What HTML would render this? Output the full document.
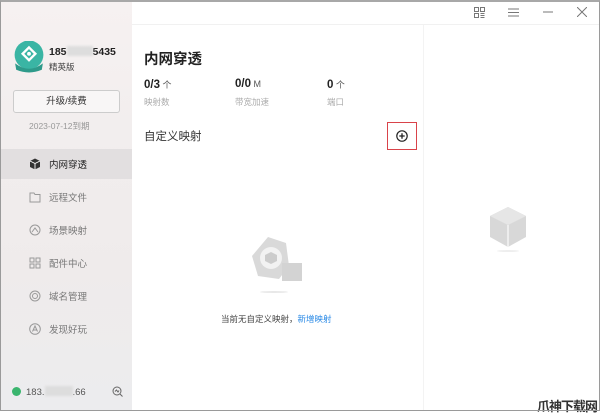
<!DOCTYPE html>
<html><head><meta charset="utf-8"><style>
*{margin:0;padding:0;box-sizing:border-box}
body{width:600px;height:411px;overflow:hidden;font-family:"Liberation Sans","Noto Sans CJK SC",sans-serif;background:#fff;position:relative;color:#222}
.frame{position:absolute;inset:0;border:1px solid #9a9a9a;border-top:2px solid #a8a8a8}
.side{position:absolute;left:1px;top:2px;width:131px;height:408px;background:linear-gradient(180deg,#f6f1f1 0%,#f1eded 40%,#efebeb 65%,#ececee 100%)}
.abs{position:absolute;white-space:nowrap}
.nav{position:absolute;left:0;width:131px;height:30px;font-size:9.5px;color:#777;display:flex;align-items:center;padding-left:28px}
.nav svg{margin-right:8px}
.nav.act{background:#e2dfe0;color:#222}
.topline{position:absolute;left:132px;top:24px;width:467px;height:1px;background:#f1f1f1}
.vline{position:absolute;left:423px;top:25px;width:1px;height:385px;background:#f3f3f3}
</style></head><body>
<div class="side">
 <svg class="abs" style="left:12px;top:39px" width="32" height="32" viewBox="0 0 30 30"><circle cx="15" cy="13" r="13.5" fill="#3ab5a4"/><path d="M2 21 Q15 31 28 21 L27 27 Q15 32 3 27Z" fill="#2e9a8a"/><path d="M15 6 L21 12 L15 18 L9 12Z" fill="none" stroke="#fff" stroke-width="2.2"/><circle cx="15" cy="12" r="1.8" fill="#fff"/></svg>
 <div class="abs" style="left:48px;top:44px;font-size:10.5px;font-weight:bold;color:#222">185<span style="display:inline-block;width:26px;height:10px;background:#ddd;vertical-align:-1px;filter:blur(1px)"></span>5435</div>
 <div class="abs" style="left:48px;top:59px;font-size:8.5px;color:#444">精英版</div>
 <div class="abs" style="left:12px;top:88px;width:107px;height:23px;border:1px solid #ccc;border-radius:3px;background:#f8f6f6;font-size:9.5px;color:#333;text-align:center;line-height:21px">升级/续费</div>
 <div class="abs" style="left:28px;top:118px;font-size:8.5px;color:#999">2023-07-12到期</div>
 <div class="nav act" style="top:147px"><svg width="12" height="12" viewBox="0 0 12 12"><path d="M6 0.5 L11 3 L11 9 L6 11.5 L1 9 L1 3Z" fill="#333"/><path d="M1 3 L6 5.5 L11 3 M6 5.5 V11.5" stroke="#fff" stroke-width="0.9" fill="none"/></svg>内网穿透</div>
 <div class="nav" style="top:180px"><svg width="12" height="11" viewBox="0 0 12 11"><path d="M1 1 H5 L6 2.5 H11 V10 H1Z" fill="none" stroke="#999" stroke-width="1"/></svg>远程文件</div>
 <div class="nav" style="top:213px"><svg width="12" height="12" viewBox="0 0 12 12"><circle cx="6" cy="6" r="5" fill="none" stroke="#999"/><path d="M3 8 L6 4 L9 8" fill="none" stroke="#999"/></svg>场景映射</div>
 <div class="nav" style="top:246px"><svg width="12" height="12" viewBox="0 0 12 12"><rect x="1" y="1" width="4" height="4" fill="none" stroke="#999"/><rect x="7" y="1" width="4" height="4" fill="none" stroke="#999"/><rect x="1" y="7" width="4" height="4" fill="none" stroke="#999"/><rect x="7" y="7" width="4" height="4" fill="none" stroke="#999"/></svg>配件中心</div>
 <div class="nav" style="top:279px"><svg width="12" height="12" viewBox="0 0 12 12"><circle cx="6" cy="6" r="5" fill="none" stroke="#999"/><circle cx="6" cy="6" r="2.5" fill="none" stroke="#999"/></svg>域名管理</div>
 <div class="nav" style="top:312px"><svg width="12" height="12" viewBox="0 0 12 12"><circle cx="6" cy="6" r="5.3" fill="none" stroke="#999"/><path d="M3.5 8.5 L6 3 L8.5 8.5 M4.5 7 H7.5" fill="none" stroke="#999"/></svg>发现好玩</div>
 <svg class="abs" style="left:11px;top:385px" width="9" height="9"><circle cx="4.5" cy="4.5" r="4.5" fill="#3ab56e"/></svg>
 <div class="abs" style="left:25px;top:384px;font-size:9.5px;color:#555">183.<span style="display:inline-block;width:28px;height:10px;background:#ddd;vertical-align:-1px;filter:blur(1px)"></span>.66</div>
 <svg class="abs" style="left:111px;top:384px" width="11" height="11" viewBox="0 0 11 11"><circle cx="5" cy="5" r="4" fill="none" stroke="#666"/><path d="M8 8 L10.5 10.5 M3 5.5 L4.5 4 L6 6 L7 4.5" stroke="#666" fill="none"/></svg>
</div>
<div class="topline"></div><div class="vline"></div>
<svg class="abs" style="left:474px;top:7px" width="11" height="11" viewBox="0 0 11 11" fill="none" stroke="#777"><rect x="0.5" y="0.5" width="4" height="4"/><rect x="6.5" y="0.5" width="4" height="4"/><rect x="0.5" y="6.5" width="4" height="4"/><path d="M6.5 6.5 H10.5 M6.5 8.5 H10.5 M6.5 10.5 H10.5"/></svg>
<svg class="abs" style="left:508px;top:8px" width="11" height="9" stroke="#777"><path d="M0 1H11M0 4.5H11M0 8H11"/></svg>
<svg class="abs" style="left:543px;top:11px" width="10" height="2" stroke="#777"><path d="M0 1H10"/></svg>
<svg class="abs" style="left:577px;top:7px" width="10" height="10" stroke="#777"><path d="M0 0L10 10M10 0L0 10"/></svg>
<div class="abs" style="left:144px;top:48px;font-size:14.5px;font-weight:bold;color:#222">内网穿透</div>
<div class="abs" style="left:144px;top:78px;font-size:11.5px;font-weight:bold">0/3<span style="font-weight:normal;font-size:9px;color:#555"> 个</span></div>
<div class="abs" style="left:235px;top:78px;font-size:11.5px;font-weight:bold">0/0<span style="font-weight:normal;font-size:9px;color:#555"> M</span></div>
<div class="abs" style="left:327px;top:78px;font-size:11.5px;font-weight:bold">0<span style="font-weight:normal;font-size:9px;color:#555"> 个</span></div>
<div class="abs" style="left:144px;top:96px;font-size:8.5px;color:#aaa">映射数</div>
<div class="abs" style="left:235px;top:96px;font-size:8.5px;color:#aaa">带宽加速</div>
<div class="abs" style="left:327px;top:96px;font-size:8.5px;color:#aaa">端口</div>
<div class="abs" style="left:144px;top:128px;font-size:11.5px;color:#333">自定义映射</div>
<div class="abs" style="left:387px;top:122px;width:30px;height:28px;border:1px solid #d9434a"></div>
<svg class="abs" style="left:396px;top:130px" width="12" height="12" viewBox="0 0 12 12"><circle cx="6" cy="6" r="5.2" fill="none" stroke="#222" stroke-width="1.2"/><path d="M6 3.3V8.7M3.3 6H8.7" stroke="#222" stroke-width="1.3"/></svg>
<svg class="abs" style="left:246px;top:236px" width="64" height="62" viewBox="0 0 64 62"><path d="M22 1 L40 7 L43 30 L33 43 L12 40 L6 20 Z" fill="#d9d9d9"/><circle cx="25" cy="22" r="11" fill="#f2f2f2"/><path d="M25 16 L31 19 V25 L25 28 L19 25 V19Z" fill="#ccc"/><rect x="36" y="27" width="20" height="18" fill="#d3d3d3"/><ellipse cx="28" cy="56" rx="14" ry="1" fill="#e8e8e8"/></svg>
<div class="abs" style="left:221px;top:313px;font-size:8.5px;color:#444">当前无自定义映射，<span style="color:#2a8ae6">新增映射</span></div>
<svg class="abs" style="left:486px;top:205px" width="44" height="48" viewBox="0 0 44 48"><path d="M22 2 L40 11 V32 L22 42 L4 32 V11Z" fill="#d8d8d8"/><path d="M4 11 L22 20 L40 11 L22 2Z" fill="#e6e6e6"/><path d="M22 20V42" stroke="#f4f4f4" stroke-width="1.5"/><ellipse cx="22" cy="46" rx="11" ry="1" fill="#eee"/></svg>
<div class="abs" style="left:537px;top:396px;font-size:13px;font-weight:bold;color:#333;letter-spacing:-1px">爪神下载网</div>
<div class="frame"></div>
</body></html>
